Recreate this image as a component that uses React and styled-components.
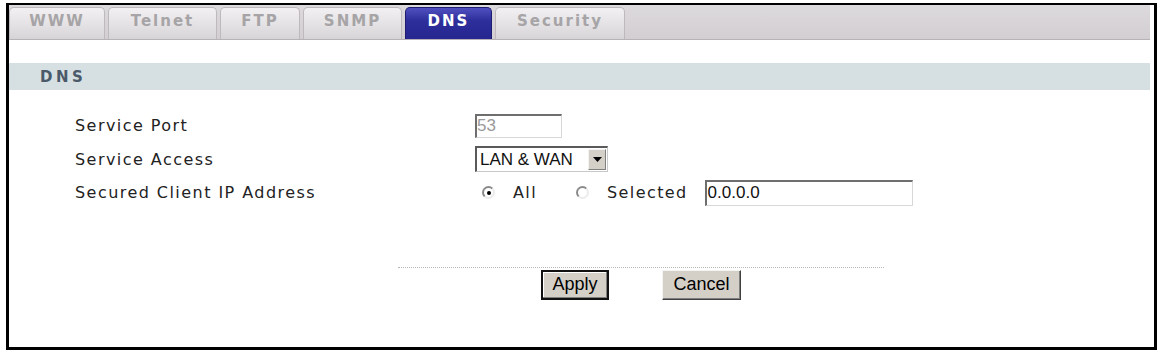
import React from "react";
import styled, { createGlobalStyle } from "styled-components";

const GlobalStyle = createGlobalStyle`
  html, body {
    margin: 0;
    padding: 0;
    background: #ffffff;
  }
`;

const tabs = [
  { label: "WWW", width: 96 },
  { label: "Telnet", width: 109 },
  { label: "FTP", width: 80 },
  { label: "SNMP", width: 99 },
  { label: "DNS", width: 87, active: true },
  { label: "Security", width: 130 },
];

function App() {
  return (
    <>
      <GlobalStyle />
      <Frame>
        <TabBar>
          {tabs.map((t) => (
            <Tab key={t.label} $width={t.width} $active={t.active}>
              {t.label}
            </Tab>
          ))}
        </TabBar>
        <Section>
          <SectionTitle>DNS</SectionTitle>
          <Form>
            <Row>
              <Label>Service Port</Label>
              <PortInput>53</PortInput>
            </Row>
            <Row>
              <Label>Service Access</Label>
              <Select>
                <span>LAN &amp; WAN</span>
                <ArrowButton>
                  <svg width="9" height="5" viewBox="0 0 9 5">
                    <path d="M0 0h9L4.5 5z" fill="#000" />
                  </svg>
                </ArrowButton>
              </Select>
            </Row>
            <Row>
              <Label>Secured Client IP Address</Label>
              <RadioGroup>
                <Radio $checked />
                <RadioText>All</RadioText>
                <Radio />
                <RadioText $last>Selected</RadioText>
                <IpInput>0.0.0.0</IpInput>
              </RadioGroup>
            </Row>
          </Form>
          <Actions>
            <Button $default>Apply</Button>
            <Button>Cancel</Button>
          </Actions>
        </Section>
      </Frame>
    </>
  );
}

const Frame = styled.div`
  box-sizing: border-box;
  margin: 3px 0 0 6px;
  width: 1151px;
  height: 347px;
  border: 3px solid #000;
  border-top-width: 2px;
  padding-right: 4px;
  background: #fff;
  font-family: "DejaVu Sans", Verdana, sans-serif;
`;

const TabBar = styled.div`
  box-sizing: border-box;
  height: 35px;
  display: flex;
  align-items: flex-end;
  gap: 3px;
  background: linear-gradient(#dddadd, #d2ced2);
  border-bottom: 1px solid #b6b2b6;
`;

const Tab = styled.div`
  box-sizing: border-box;
  width: ${(p) => p.$width}px;
  height: 32px;
  display: flex;
  align-items: center;
  justify-content: center;
  border-radius: 5px 5px 0 0;
  border: 1px solid ${(p) => (p.$active ? "#1c1c70" : "#bdb9bd")};
  border-bottom: none;
  background: ${(p) =>
    p.$active
      ? "linear-gradient(#5050c0, #2e2e9c 40%, #262690)"
      : "linear-gradient(#f2f0f2, #e2e0e2 60%, #d6d4d6)"};
  color: ${(p) => (p.$active ? "#ffffff" : "#a6a4a6")};
  font-size: 15px;
  font-weight: bold;
  letter-spacing: 2px;
  padding-bottom: 5px;
`;

const Section = styled.div`
  padding-top: 23px;
`;

const SectionTitle = styled.div`
  height: 27px;
  display: flex;
  align-items: center;
  padding-left: 31px;
  background: #d6dfe1;
  color: #4a5a6a;
  font-size: 15px;
  font-weight: bold;
  letter-spacing: 3.5px;
`;

const Form = styled.div`
  padding: 19px 0 0 66px;
  display: flex;
  flex-direction: column;
`;

const Row = styled.div`
  height: 33.5px;
  display: flex;
  align-items: center;
`;

const Label = styled.div`
  width: 400px;
  color: #222;
  font-size: 16px;
  letter-spacing: 1.45px;
`;

const inset = `
  box-sizing: border-box;
  border-style: solid;
  border-width: 2px 1px 1px 2px;
  border-color: #6e6e6e #d8d8d8 #d8d8d8 #6e6e6e;
  background: #fff;
  font-family: "Liberation Sans", Arial, sans-serif;
  font-size: 17px;
  display: flex;
  align-items: center;
`;

const PortInput = styled.div`
  ${inset}
  width: 87px;
  height: 24px;
  padding-left: 0;
  color: #9a9a9a;
`;

const Select = styled.div`
  ${inset}
  width: 133px;
  height: 26px;
  padding-left: 3px;
  justify-content: space-between;
  color: #111;
  border-color: #5a5a5a #c8c8c8 #c8c8c8 #5a5a5a;
`;

const ArrowButton = styled.div`
  box-sizing: border-box;
  width: 18px;
  height: 21px;
  margin: 0 1px 0 0;
  background: #d4d0c8;
  border: 1px solid;
  border-color: #f4f4f4 #808080 #808080 #f4f4f4;
  display: flex;
  align-items: center;
  justify-content: center;
`;

const RadioGroup = styled.div`
  display: flex;
  align-items: center;
`;

const Radio = styled.span`
  box-sizing: border-box;
  width: 13px;
  height: 13px;
  margin-left: 7px;
  border-radius: 50%;
  border: 2px solid;
  border-color: #8a8a8a #ececec #ececec #8a8a8a;
  background: #fff;
  display: flex;
  align-items: center;
  justify-content: center;
  &::after {
    content: "";
    width: 4px;
    height: 4px;
    border-radius: 50%;
    background: ${(p) => (p.$checked ? "#000" : "transparent")};
  }
`;

const RadioText = styled.span`
  margin: 0 ${(p) => (p.$last ? "17px" : "32px")} 0 18px;
  color: #222;
  font-size: 16px;
  letter-spacing: 1.4px;
`;

const IpInput = styled.div`
  ${inset}
  width: 208px;
  height: 26px;
  padding-left: 1px;
  color: #111;
`;

const Actions = styled.div`
  margin: 57px 0 0 389px;
  width: 486px;
  border-top: 1px dotted #b8b8b8;
  padding-top: 2px;
  display: flex;
  justify-content: center;
  gap: 53px;
`;

const Button = styled.button`
  box-sizing: border-box;
  height: 30px;
  padding: 0;
  background: #d4d0c8;
  font-family: "Liberation Sans", Arial, sans-serif;
  font-size: 18px;
  color: #000;
  border: ${(p) => (p.$default ? "2px solid #111" : "1px solid")};
  border-color: ${(p) =>
    p.$default ? "#111" : "#f4f4f4 #404040 #404040 #f4f4f4"};
  box-shadow: ${(p) =>
    p.$default
      ? "inset -1px -1px #808080, inset 1px 1px #fff"
      : "inset -1px -1px #808080"};
  width: ${(p) => (p.$default ? "68px" : "79px")};
`;

export default App;
